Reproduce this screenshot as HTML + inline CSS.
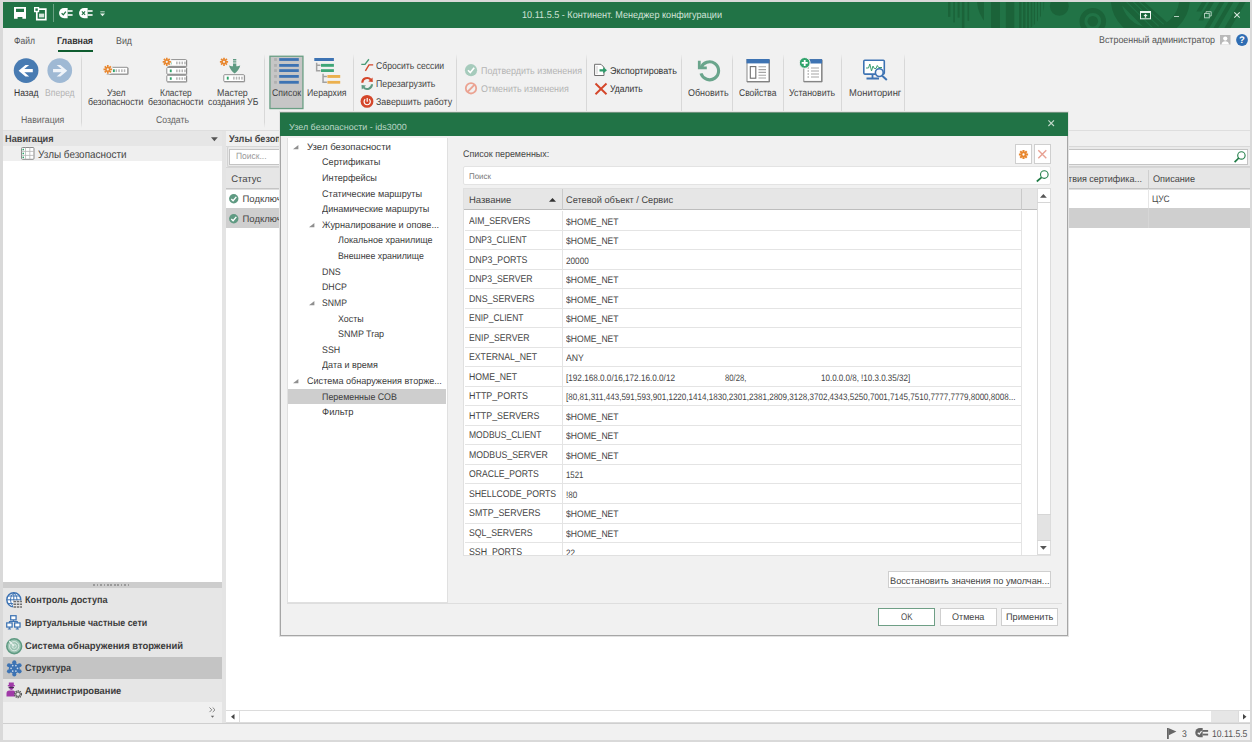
<!DOCTYPE html>
<html lang="ru"><head>
<meta charset="utf-8">
<title>10.11.5.5 - Континент. Менеджер конфигурации</title>
<style>
html,body{margin:0;padding:0}
body{text-rendering:geometricPrecision;width:1252px;height:742px;overflow:hidden;background:#f1f1f1;position:relative;font-family:"Liberation Sans",sans-serif;font-size:9.6px;color:#444}
.a{position:absolute}
.t{position:absolute;white-space:nowrap;line-height:12px;font-size:9.8px}
.c{text-align:center}
.b{font-weight:bold}
svg{position:absolute;overflow:visible}
.d{font-size:9.5px;color:#454545}
.vs{position:absolute;width:1px;background:linear-gradient(to bottom,rgba(214,214,214,0) 0,#d8d8d8 9%,#d8d8d8 92%,rgba(214,214,214,0) 100%);top:54px;height:74px}
.g{color:#b4b4b4}
</style>
</head>
<body>
<!-- TITLE BAR -->
<div class="a" style="left:0;top:0;width:1252px;height:28px;background:#217346"></div>
<svg style="left:940px;top:2px;overflow:hidden" width="310" height="26" viewBox="940 2 310 26">
 <defs><clipPath id="cpa"><circle cx="1011" cy="0" r="34"></circle></clipPath><clipPath id="cpb"><circle cx="1150.300" cy="-1.600" r="29.200"></circle></clipPath></defs>
 <g fill="#1b6339">
  <rect x="948" y="2" width="2.4" height="14.8"></rect>
  <rect x="953.3" y="2" width="1.5" height="20.4"></rect>
  <rect x="957.6" y="2" width="2.0" height="15.6"></rect>
  <rect x="961.9" y="2" width="2.5" height="26.0"></rect>
  <rect x="967.5" y="2" width="1.7" height="18.8"></rect>
  <g clip-path="url(#cpa)"><rect x="977" y="2" width="7.0" height="26"></rect><rect x="991" y="2" width="9.0" height="26"></rect><rect x="1005.8" y="2" width="8.5" height="26"></rect><rect x="1019" y="2" width="2.5" height="26"></rect><rect x="1023" y="2" width="2.5" height="26"></rect><rect x="1027" y="2" width="2.0" height="26"></rect><rect x="1030.7" y="2" width="1.6" height="26"></rect><rect x="1033.8" y="2" width="1.2" height="26"></rect><rect x="1037" y="2" width="1.0" height="26"></rect><rect x="1040" y="2" width="1.0" height="26"></rect><rect x="1043.4" y="2" width="0.8" height="26"></rect></g>
  <circle cx="1059.300" cy="6.300" r="9.400"></circle>
  <circle cx="1092.800" cy="21.300" r="5.300"></circle>
  <circle cx="1092.800" cy="21.300" r="10.850" fill="none" stroke="#1b6339" stroke-width="4.900"></circle>
  <circle cx="1150.300" cy="-1.600" r="34.300" fill="none" stroke="#1b6339" stroke-width="10.600"></circle>
  <g clip-path="url(#cpb)"><path d="M1116.6 0L1142.1 0L1175.5 30L1146.6 30Z"></path><g stroke="#217346" stroke-width="1.100" fill="none"><path d="M1124.7 0L1154.7 30"></path><path d="M1131.3 0L1162.5 30"></path><path d="M1137.4 0L1169.8 30"></path></g></g>
  <path d="M1202 2L1206.8 2L1201.2 11.5L1196.4 11.5Z"></path>
  <path d="M1209.3 2L1214.1 2L1203.2 20.6L1198.4 20.6Z"></path>
  <path d="M1219.6 2L1224.4 2L1209.2 28L1204.4 28Z"></path>
  <path d="M1228.7 2L1233.5 2L1218.3 28L1213.5 28Z"></path>
  <path d="M1239.6 2L1245.7 2L1230.5 28L1224.4 28Z"></path>
 </g>
</svg>
<!-- QAT icons -->
<svg style="left:14.200px;top:7.200px" width="12" height="11.800" viewBox="0 0 12 11.800"><path d="M0 0H12V11.800H0Z M2 1.700V5.100H10V1.700Z M3.600 10V11.800H8.400V10Z" fill="#fff" fill-rule="evenodd"></path></svg>
<svg style="left:33.500px;top:6.500px" width="13" height="13.500" viewBox="0 0 13 13.500"><path d="M2.800 2.200H11.800V12.600H2.800Z" fill="none" stroke="#fff" stroke-width="1.700"></path><rect x="0.700" y="0.700" width="3.800" height="3.800" fill="#217346" stroke="#fff" stroke-width="1.400"></rect><rect x="5" y="6.600" width="5.200" height="3.800" fill="#d5e6dc"></rect></svg>
<div class="a" style="left:52.500px;top:4px;width:1px;height:18px;background:#6aa283"></div>
<svg style="left:59px;top:8.100px" width="14" height="10.200" viewBox="0 0 14 10.200"><path d="M5.100 0H8.600V10.200H5.100A5.100 5.100 0 0 1 5.100 0Z" fill="#fff"></path><rect x="8.600" y="2.200" width="5" height="1.600" fill="#fff"></rect><rect x="8.600" y="6.200" width="5" height="1.600" fill="#fff"></rect><path d="M2.600 5.200L4.300 6.800L6.800 3.600" stroke="#217346" stroke-width="1.200" fill="none"></path></svg>
<svg style="left:79.100px;top:8.100px" width="14" height="10.200" viewBox="0 0 14 10.200"><path d="M5.100 0H8.600V10.200H5.100A5.100 5.100 0 0 1 5.100 0Z" fill="#fff"></path><rect x="8.600" y="2.200" width="5" height="1.600" fill="#fff"></rect><rect x="8.600" y="6.200" width="5" height="1.600" fill="#fff"></rect><path d="M2.900 3.500L6.100 6.900M6.100 3.500L2.900 6.900" stroke="#217346" stroke-width="1.100" fill="none"></path></svg>
<svg style="left:99.500px;top:10.500px" width="5" height="6" viewBox="0 0 5 6"><rect x="0.300" y="0.300" width="4.400" height="1" fill="#bcd6c6"></rect><path d="M0 2.600H5L2.500 5.200Z" fill="#e6f1ea"></path></svg>
<span class="t" style="left: 521.5px; color: rgb(210, 228, 217); top: 10px; transform: scaleX(0.929); transform-origin: 0px 50%;">10.11.5.5 - Континент. Менеджер конфигурации</span>
<!-- window controls -->
<svg style="left:1140px;top:10.500px" width="11" height="8.500" viewBox="0 0 11 8.500"><rect x="0.500" y="0.500" width="10" height="7.300" fill="none" stroke="#eef5f0" stroke-width="1"></rect><rect x="0.500" y="0.500" width="10" height="1.500" fill="#eef5f0"></rect><path d="M5.500 2.800L7.600 4.900H6.200V6.800H4.800V4.900H3.400Z" fill="#eef5f0"></path></svg>
<div class="a" style="left:1174px;top:16px;width:5px;height:1.400px;background:#b5d1c1"></div>
<svg style="left:1204px;top:11px" width="8" height="8" viewBox="0 0 8 8"><rect x="0.500" y="2.500" width="4.800" height="4.300" fill="none" stroke="#a9c9b7" stroke-width="1"></rect><path d="M2 2.500V0.700H7.200V5H5.300" fill="none" stroke="#a9c9b7" stroke-width="1"></path></svg>
<svg style="left:1234px;top:12px" width="6" height="6" viewBox="0 0 6 6"><path d="M0.300 0.300L5.700 5.700M5.700 0.300L0.300 5.700" stroke="#d9e9df" stroke-width="1.100"></path></svg>
<!-- MENU -->
<span class="t" style="left: 13.5px; color: rgb(85, 85, 85); top: 36px; transform: scaleX(0.872); transform-origin: 0px 50%;">Файл</span>
<span class="t b" style="left: 57.3px; color: rgb(51, 51, 51); top: 36px; transform: scaleX(0.904); transform-origin: 0px 50%;">Главная</span>
<span class="t" style="left: 116px; color: rgb(85, 85, 85); top: 36px; transform: scaleX(0.902); transform-origin: 0px 50%;">Вид</span>
<div class="a" style="left:58.400px;top:49.800px;width:34.200px;height:2.200px;background:#0e5c2f"></div>
<span class="t" style="left: 1098.8px; color: rgb(85, 85, 85); top: 35px; transform: scaleX(0.907); transform-origin: 0px 50%;">Встроенный администратор</span>
<svg style="left:1219.500px;top:34.700px" width="10.500" height="9.500" viewBox="0 0 10.500 9.500"><rect width="10.500" height="9.500" fill="#b9b9b9"></rect><circle cx="5.250" cy="3.600" r="2.100" fill="#fff"></circle><path d="M1.500 9.500A3.800 3.800 0 0 1 9 9.500Z" fill="#fff"></path></svg>
<svg style="left:1235.500px;top:33.600px" width="12" height="12" viewBox="0 0 12 12"><circle cx="6" cy="6" r="5.900" fill="#2f6db3"></circle><text x="6" y="9.400" font-family="Liberation Sans, sans-serif" font-size="9.500" font-weight="bold" fill="#fff" text-anchor="middle">?</text></svg>
<!-- RIBBON -->
<div class="a" style="left:2px;top:129.500px;width:1248px;height:1px;background:#dedede"></div>
<svg style="left:0;top:0" width="1252" height="132" viewBox="0 0 1252 132">
 <!-- back / forward -->
 <circle cx="26.100" cy="70.550" r="12.350" fill="#487bb2"></circle>
 <path d="M18.600 70.700L25.500 64.900H29.200L24.300 69.100H32.800V72.300H24.300L29.200 76.600H25.500Z" fill="#fff"></path>
 <circle cx="59.750" cy="70.550" r="12.350" fill="#9fb9d4"></circle>
 <path d="M67.250 70.700L60.350 64.900H56.650L61.550 69.100H53.050V72.300H61.550L56.650 76.600H60.350Z" fill="#f0f4f9"></path>
 <!-- Узел безопасности icon -->
 <rect x="106.3" y="67.3" width="21.5" height="6.8" rx="0.800" fill="#fff" stroke="#8f8f8f" stroke-width="1"></rect><path d="M106.8 74.39999999999999H128.1V67.8" fill="none" stroke="#858585" stroke-width="0.600"></path><rect x="112.9" y="69.3" width="1.900" height="2.8" fill="#2fa36b"></rect><rect x="115.6" y="69.3" width="1.500" height="2.8" fill="#b4b4b4"></rect><rect x="118.3" y="69.3" width="1.500" height="2.8" fill="#b4b4b4"></rect><rect x="121.1" y="69.3" width="1.500" height="2.8" fill="#b4b4b4"></rect><rect x="123.8" y="69.3" width="1.500" height="2.8" fill="#b4b4b4"></rect>
 <g transform="translate(107.8 69.4)" stroke="#e8872f" stroke-width="1.700" stroke-linecap="butt"><circle r="5.2" fill="#f1f1f1" stroke="none"></circle><path d="M0 -4.3V4.3M-4.3 0H4.3M-3.05 -3.05L3.05 3.05M-3.05 3.05L3.05 -3.05"></path><circle r="2.15" fill="#e8872f" stroke="none"></circle><circle r="1.100" fill="#f1f1f1" stroke="none"></circle></g>
 <!-- Кластер -->
 <rect x="166.8" y="59.6" width="19.7" height="6.7" rx="0.800" fill="#fff" stroke="#8f8f8f" stroke-width="1"></rect><path d="M167.3 66.6H186.8V60.1" fill="none" stroke="#858585" stroke-width="0.600"></path><rect x="169.8" y="61.6" width="1.900" height="2.7" fill="#2fa36b"></rect><rect x="176.1" y="61.6" width="1.500" height="2.7" fill="#b4b4b4"></rect><rect x="178.8" y="61.6" width="1.500" height="2.7" fill="#b4b4b4"></rect><rect x="181.5" y="61.6" width="1.500" height="2.7" fill="#b4b4b4"></rect><rect x="184.2" y="61.6" width="1.500" height="2.7" fill="#b4b4b4"></rect>
 <rect x="166.8" y="67.5" width="19.7" height="6.7" rx="0.800" fill="#fff" stroke="#8f8f8f" stroke-width="1"></rect><path d="M167.3 74.5H186.8V68.0" fill="none" stroke="#858585" stroke-width="0.600"></path><rect x="169.8" y="69.5" width="1.900" height="2.7" fill="#2fa36b"></rect><rect x="176.1" y="69.5" width="1.500" height="2.7" fill="#b4b4b4"></rect><rect x="178.8" y="69.5" width="1.500" height="2.7" fill="#b4b4b4"></rect><rect x="181.5" y="69.5" width="1.500" height="2.7" fill="#b4b4b4"></rect><rect x="184.2" y="69.5" width="1.500" height="2.7" fill="#b4b4b4"></rect>
 <rect x="166.8" y="75.3" width="19.7" height="6.5" rx="0.800" fill="#fff" stroke="#8f8f8f" stroke-width="1"></rect><path d="M167.3 82.1H186.8V75.8" fill="none" stroke="#858585" stroke-width="0.600"></path><rect x="169.8" y="77.3" width="1.900" height="2.5" fill="#2fa36b"></rect><rect x="176.1" y="77.3" width="1.500" height="2.5" fill="#b4b4b4"></rect><rect x="178.8" y="77.3" width="1.500" height="2.5" fill="#b4b4b4"></rect><rect x="181.5" y="77.3" width="1.500" height="2.5" fill="#b4b4b4"></rect><rect x="184.2" y="77.3" width="1.500" height="2.5" fill="#b4b4b4"></rect>
 <g transform="translate(166.8 61.8)" stroke="#e8872f" stroke-width="1.700" stroke-linecap="butt"><circle r="5.0" fill="#f1f1f1" stroke="none"></circle><path d="M0 -4.1V4.1M-4.1 0H4.1M-2.91 -2.91L2.91 2.91M-2.91 2.91L2.91 -2.91"></path><circle r="2.05" fill="#e8872f" stroke="none"></circle><circle r="1.100" fill="#f1f1f1" stroke="none"></circle></g>
 <!-- Мастер -->
 <rect x="223.8" y="74.7" width="20.5" height="6.9" rx="0.800" fill="#fff" stroke="#8f8f8f" stroke-width="1"></rect><path d="M224.3 81.9H244.60000000000002V75.2" fill="none" stroke="#858585" stroke-width="0.600"></path><rect x="226.8" y="76.7" width="1.900" height="2.9" fill="#2fa36b"></rect><rect x="233.1" y="76.7" width="1.500" height="2.9" fill="#b4b4b4"></rect><rect x="235.8" y="76.7" width="1.500" height="2.9" fill="#b4b4b4"></rect><rect x="238.5" y="76.7" width="1.500" height="2.9" fill="#b4b4b4"></rect><rect x="241.2" y="76.7" width="1.500" height="2.9" fill="#b4b4b4"></rect>
 <path d="M233 59H236.300V60.400H233ZM233 61.200H236.300V62.600H233ZM233 63.400H236.300V66.300C238 66.300 239.500 65.800 240.200 65.200C239.800 68.500 237 71.800 234.650 73.400C232.300 71.800 229.500 68.500 229.100 65.200C229.800 65.800 231.300 66.300 233 66.300Z" fill="#5f9a82"></path>
 <g transform="translate(224 61.8)" stroke="#e8872f" stroke-width="1.700" stroke-linecap="butt"><path d="M0 -4.1V4.1M-4.1 0H4.1M-2.91 -2.91L2.91 2.91M-2.91 2.91L2.91 -2.91"></path><circle r="2.05" fill="#e8872f" stroke="none"></circle><circle r="1.100" fill="#f1f1f1" stroke="none"></circle></g>
 <!-- Список button -->
 <rect x="269.950" y="56.250" width="33" height="52.300" fill="#c6c6c6" stroke="#6a9f84" stroke-width="1.300"></rect>
 <g fill="#3d73b3"><rect x="279.200" y="58.1" width="19.600" height="2.800"></rect><rect x="279.200" y="64" width="19.600" height="2.800"></rect><rect x="279.200" y="69.2" width="19.600" height="2.800"></rect><rect x="279.200" y="75" width="19.600" height="2.800"></rect><rect x="279.200" y="80.9" width="19.600" height="2.800"></rect></g>
 <g fill="#b0b0b0"><rect x="274.100" y="58.1" width="2.800" height="2.800"></rect><rect x="274.100" y="64" width="2.800" height="2.800"></rect><rect x="274.100" y="69.2" width="2.800" height="2.800"></rect><rect x="274.100" y="75" width="2.800" height="2.800"></rect><rect x="274.100" y="80.9" width="2.800" height="2.800"></rect></g>
 <!-- Иерархия icon -->
 <rect x="314.300" y="58" width="19.600" height="3" fill="#3d73b3"></rect>
 <rect x="321" y="63.900" width="12.900" height="2.900" fill="#3fa677"></rect><rect x="321" y="69.200" width="12.900" height="2.800" fill="#3fa677"></rect>
 <rect x="327.400" y="75" width="12.800" height="2.900" fill="#ebb04e"></rect><rect x="327.400" y="80.900" width="12.800" height="2.800" fill="#ebb04e"></rect>
 <path d="M316.650 62.800V70.700H320.500M316.650 65.200H320.500M323.050 73.800V82.200H326.900M323.050 76.500H326.900" fill="none" stroke="#a2a2a2" stroke-width="1.500"></path>
 <!-- Сбросить сессии -->
 <path d="M361.300 64.400H365L368.900 59.300" fill="none" stroke="#4a9a76" stroke-width="1.400"></path>
 <path d="M365.400 70.900L369 64.900H373.200" fill="none" stroke="#d4462a" stroke-width="1.400"></path>
 <!-- Перезагрузить -->
 <path d="M362.300 82.800A4.900 4.900 0 0 1 370.800 79.600" fill="none" stroke="#d4462a" stroke-width="2.100"></path>
 <path d="M368.300 81.500L372.800 82L372.500 77.500Z" fill="#d4462a"></path>
 <path d="M372 84.200A4.900 4.900 0 0 1 363.500 87.400" fill="none" stroke="#5f9a82" stroke-width="2.100"></path>
 <path d="M366 85.500L361.500 85L361.800 89.500Z" fill="#5f9a82"></path>
 <!-- Завершить работу -->
 <circle cx="367" cy="101.400" r="6.400" fill="#d4462a"></circle>
 <path d="M365.200 99.300A3.100 3.100 0 1 0 369.200 99.300" fill="none" stroke="#fff" stroke-width="1.200"></path><path d="M367.200 98V101.800" stroke="#fff" stroke-width="1.200"></path>
 <!-- Подтвердить / Отменить -->
 <circle cx="471" cy="70.200" r="6.100" fill="#a6cbbc"></circle><path d="M468 70.300L470.300 72.600L474.200 67.800" fill="none" stroke="#fff" stroke-width="1.600"></path>
 <circle cx="471" cy="88.300" r="5.200" fill="none" stroke="#eba392" stroke-width="1.800"></circle><path d="M467.400 92L474.600 84.600" stroke="#eba392" stroke-width="1.800"></path>
 <!-- Экспортировать -->
 <path d="M594.600 64.300H601L604 67.300V75.500H594.600Z" fill="#fff" stroke="#6e6e6e" stroke-width="1"></path>
 <path d="M597 66.500V73.500" stroke="#9a9a9a" stroke-width="1" stroke-dasharray="1 1"></path>
 <path d="M599.500 69.200H603.200V67L607 70.300L603.200 73.600V71.400H599.500Z" fill="#2f9a6a"></path>
 <!-- Удалить -->
 <path d="M595.500 83.500L606.500 94.300M606.500 83.500L595.500 94.300" stroke="#d4462a" stroke-width="1.900"></path>
 <!-- Обновить -->
 <path d="M701 68.200A9 9 0 1 1 701 73.400" fill="none" stroke="#6aa58c" stroke-width="3.100"></path>
 <path d="M699.300 60.700V67.800H706.800" fill="none" stroke="#6aa58c" stroke-width="2.800"></path>
 <!-- Свойства -->
 <rect x="747" y="59.500" width="22" height="22" fill="#fff" stroke="#8a8a8a" stroke-width="1"></rect>
 <path d="M747 82H769.500V60" fill="none" stroke="#777" stroke-width="0.800"></path>
 <rect x="746.500" y="59" width="23" height="4.400" fill="#3d73b3"></rect>
 <rect x="750.300" y="66.600" width="5.500" height="11.600" fill="#fff" stroke="#6e6e6e" stroke-width="1.100"></rect>
 <path d="M758.500 66.800H766M758.500 69.600H766M758.500 72.400H766M758.500 75.200H766M758.500 78H766" stroke="#a5a5a5" stroke-width="1.100"></path>
 <!-- Установить -->
 <rect x="803.800" y="59.600" width="17.800" height="21.800" fill="#fff" stroke="#8a8a8a" stroke-width="1"></rect>
 <path d="M803.800 81.900H822.100V60" fill="none" stroke="#777" stroke-width="0.800"></path>
 <rect x="810" y="59.100" width="12.100" height="4.400" fill="#3d73b3"></rect>
 <path d="M807.500 68H809M807.500 71H809M807.500 74H809M807.500 77H809" stroke="#8a8a8a" stroke-width="1.200"></path>
 <path d="M811 68H819M811 71H819M811 74H819M811 77H819" stroke="#a5a5a5" stroke-width="1.100"></path>
 <circle cx="804.700" cy="62.900" r="5.400" fill="#2fa36b" stroke="#f1f1f1" stroke-width="1"></circle>
 <path d="M804.700 59.900V65.900M801.700 62.900H807.700" stroke="#fff" stroke-width="1.800"></path>
 <!-- Мониторинг -->
 <rect x="863.800" y="60.300" width="20.500" height="13.800" rx="1" fill="#fff" stroke="#3d73b3" stroke-width="1.600"></rect>
 <path d="M866 68H868.500L869.800 64L871.500 71L873 66L874.300 68.500H876L877.300 65.500L878.600 67.500H882" fill="none" stroke="#3c9f72" stroke-width="1"></path>
 <path d="M872.500 74.500V77.500M866.500 78.500H879" stroke="#3d73b3" stroke-width="1.800"></path>
 <circle cx="879.300" cy="72.600" r="3.900" fill="#f4f7fb" stroke="#3d73b3" stroke-width="1.600"></circle>
 <path d="M882.200 75.700L886.800 80" stroke="#3d73b3" stroke-width="2"></path>
</svg>
<div class="vs" style="left:81.0px"></div>
<div class="vs" style="left:264.3px"></div>
<div class="vs" style="left:353.0px"></div>
<div class="vs" style="left:456.4px"></div>
<div class="vs" style="left:586.0px"></div>
<div class="vs" style="left:681.1px"></div>
<div class="vs" style="left:732.0px"></div>
<div class="vs" style="left:783.0px"></div>
<div class="vs" style="left:841.3px"></div>
<div class="vs" style="left:903.5px"></div>
<span class="t " style="left: 13.7px; color: rgb(51, 51, 51); top: 88px; transform: scaleX(0.873); transform-origin: 0px 50%;">Назад</span>
<span class="t g" style="left: 45.3px; top: 88px; transform: scaleX(0.879); transform-origin: 0px 50%;">Вперед</span>
<span class="t " style="left: 21px; color: rgb(102, 102, 102); top: 115px; transform: scaleX(0.895); transform-origin: 0px 50%;">Навигация</span>
<span class="t " style="left: 106.6px; color: rgb(68, 68, 68); top: 88px; transform: scaleX(0.89); transform-origin: 0px 50%;">Узел</span>
<span class="t " style="left: 87.9px; color: rgb(68, 68, 68); top: 97px; transform: scaleX(0.896); transform-origin: 0px 50%;">безопасности</span>
<span class="t " style="left: 159.7px; color: rgb(68, 68, 68); top: 88px; transform: scaleX(0.858); transform-origin: 0px 50%;">Кластер</span>
<span class="t " style="left: 147.8px; color: rgb(68, 68, 68); top: 97px; transform: scaleX(0.894); transform-origin: 0px 50%;">безопасности</span>
<span class="t " style="left: 217.4px; color: rgb(68, 68, 68); top: 88px; transform: scaleX(0.908); transform-origin: 0px 50%;">Мастер</span>
<span class="t " style="left: 208px; color: rgb(68, 68, 68); top: 97px; transform: scaleX(0.877); transform-origin: 0px 50%;">создания УБ</span>
<span class="t " style="left: 156.3px; color: rgb(102, 102, 102); top: 115px; transform: scaleX(0.886); transform-origin: 0px 50%;">Создать</span>
<span class="t " style="left: 271.7px; color: rgb(68, 68, 68); top: 88px; transform: scaleX(0.892); transform-origin: 0px 50%;">Список</span>
<span class="t " style="left: 307.4px; color: rgb(68, 68, 68); top: 88px; transform: scaleX(0.892); transform-origin: 0px 50%;">Иерархия</span>
<span class="t " style="left: 376.3px; color: rgb(68, 68, 68); top: 61px; transform: scaleX(0.879); transform-origin: 0px 50%;">Сбросить сессии</span>
<span class="t " style="left: 376.3px; color: rgb(68, 68, 68); top: 79px; transform: scaleX(0.893); transform-origin: 0px 50%;">Перезагрузить</span>
<span class="t " style="left: 376.3px; color: rgb(68, 68, 68); top: 97px; transform: scaleX(0.904); transform-origin: 0px 50%;">Завершить работу</span>
<span class="t g" style="left: 480.7px; top: 66px; transform: scaleX(0.91); transform-origin: 0px 50%;">Подтвердить изменения</span>
<span class="t g" style="left: 480.7px; top: 84px; transform: scaleX(0.908); transform-origin: 0px 50%;">Отменить изменения</span>
<span class="t " style="left: 610px; color: rgb(51, 51, 51); top: 66px; transform: scaleX(0.914); transform-origin: 0px 50%;">Экспортировать</span>
<span class="t " style="left: 610px; color: rgb(51, 51, 51); top: 84px; transform: scaleX(0.872); transform-origin: 0px 50%;">Удалить</span>
<span class="t " style="left: 688px; color: rgb(68, 68, 68); top: 88px; transform: scaleX(0.915); transform-origin: 0px 50%;">Обновить</span>
<span class="t " style="left: 739.2px; color: rgb(68, 68, 68); top: 88px; transform: scaleX(0.869); transform-origin: 0px 50%;">Свойства</span>
<span class="t " style="left: 789.4px; color: rgb(68, 68, 68); top: 88px; transform: scaleX(0.898); transform-origin: 0px 50%;">Установить</span>
<span class="t " style="left: 848.5px; color: rgb(68, 68, 68); top: 88px; transform: scaleX(0.962); transform-origin: 0px 50%;">Мониторинг</span>
<!-- NAV PANEL -->
<div class="a" style="left:2px;top:130.500px;width:1248px;height:593px;background:#e4e4e4"></div>
<div class="a" style="left:2px;top:131px;width:220.400px;height:15.400px;background:#e6e6e6"></div>
<div class="a" style="left:2px;top:146.400px;width:220.400px;height:435.400px;background:#fff"></div>
<div class="a" style="left:2px;top:146.400px;width:220.400px;height:14.800px;background:#efefef"></div>
<svg style="left:211px;top:136.500px" width="6.800" height="4.300" viewBox="0 0 6 3.500"><path d="M0 0H6L3 3.500Z" fill="#555"></path></svg>
<svg style="left:21.300px;top:147.300px" width="13.500" height="12.800" viewBox="0 0 13.500 12.800"><rect x="0.500" y="0.500" width="12.500" height="11.800" rx="1" fill="#fff" stroke="#8a8a8a"></rect><path d="M0.500 4.400H13M0.500 8.400H13M4.500 0.500V12.300M8.800 0.500V12.300" stroke="#b5b5b5" stroke-width="0.800"></path><rect x="1.500" y="1.800" width="1.500" height="1.500" fill="#2fa36b"></rect><rect x="1.500" y="5.700" width="1.500" height="1.500" fill="#2fa36b"></rect><rect x="1.500" y="9.600" width="1.500" height="1.500" fill="#2fa36b"></rect></svg>
<div class="a" style="left:2px;top:581.800px;width:220.400px;height:6.200px;background:#cdcdcd"></div>
<div class="a" style="left:93px;top:584px;width:38px;height:1.500px;background:repeating-linear-gradient(90deg,#9a9a9a 0 1.500px,transparent 1.500px 3.500px)"></div>
<div class="a" style="left:2px;top:588px;width:220.400px;height:113.700px;background:#e6e6e6"></div>
<div class="a" style="left:2px;top:657.200px;width:220.400px;height:21.800px;background:#c4c4c4"></div>
<div class="a" style="left:2px;top:701.700px;width:220.400px;height:21.300px;background:#f0f0f0"></div>
<!-- nav icons -->
<svg style="left:5.500px;top:592px" width="17" height="17" viewBox="0 0 17 17"><circle cx="7.800" cy="7.800" r="7" fill="#fff" stroke="#3d73b3" stroke-width="1.400"></circle><path d="M7.800 0.800V14.800M0.800 7.800H14.800M2 4H13.600M2 11.600H13.600M7.800 0.800C3.500 4 3.500 11.600 7.800 14.800M7.800 0.800C12 4 12 11.600 7.800 14.800" fill="none" stroke="#3d73b3" stroke-width="1"></path><rect x="7" y="8.500" width="9.500" height="7.500" fill="#e6e6e6"></rect><path d="M7.500 9.500H16M7.500 12.200H16M7.500 15H16" stroke="#6e6e6e" stroke-width="1.500" stroke-dasharray="2.500 0.800"></path></svg>
<svg style="left:5.800px;top:615px" width="15.300" height="15.300" viewBox="0 0 17 17"><g fill="#fff" stroke="#3d73b3" stroke-width="1.400"><rect x="5.200" y="0.800" width="6" height="4.600"></rect><rect x="0.800" y="8.800" width="6" height="4.600"></rect><rect x="9.600" y="8.800" width="6" height="4.600"></rect></g><path d="M8.200 5.500V7.200M3.800 8.800V7.200H12.600V8.800M2 15.500H5.600M10.800 15.500H14.400M3.800 13.500V15.500M12.600 13.500V15.500" fill="none" stroke="#3d73b3" stroke-width="1.200"></path></svg>
<svg style="left:5.500px;top:637.800px" width="17" height="17" viewBox="0 0 17 17"><circle cx="8.200" cy="8.200" r="7.400" fill="#9cc4b3" stroke="#5f9a82" stroke-width="1.600"></circle><circle cx="8.200" cy="8.200" r="4.600" fill="none" stroke="#dcebe4" stroke-width="1"></circle><circle cx="8.200" cy="8.200" r="2.100" fill="none" stroke="#dcebe4" stroke-width="1"></circle><path d="M8.200 8.200L3.200 3" stroke="#e6f1ec" stroke-width="1.300"></path></svg>
<svg style="left:5.700px;top:660.200px" width="16.600" height="16.600" viewBox="0 0 16.600 16.600"><g fill="#3d73b3"><circle cx="8.3" cy="8.3" r="5.400"></circle><circle cx="8.30" cy="2.20" r="2.050"></circle><circle cx="13.58" cy="5.25" r="2.050"></circle><circle cx="13.58" cy="11.35" r="2.050"></circle><circle cx="8.30" cy="14.40" r="2.050"></circle><circle cx="3.02" cy="11.35" r="2.050"></circle><circle cx="3.02" cy="5.25" r="2.050"></circle></g><g fill="#c9d9ec"><circle cx="9.90" cy="5.53" r="0.850"></circle><circle cx="11.50" cy="8.30" r="0.850"></circle><circle cx="9.90" cy="11.07" r="0.850"></circle><circle cx="6.70" cy="11.07" r="0.850"></circle><circle cx="5.10" cy="8.30" r="0.850"></circle><circle cx="6.70" cy="5.53" r="0.850"></circle></g></svg>
<svg style="left:5.500px;top:682px" width="17" height="17" viewBox="0 0 17 17"><rect x="2.800" y="0.500" width="5" height="2.600" fill="#a03aa8"></rect><rect x="1.800" y="3" width="7" height="1.300" fill="#a03aa8"></rect><circle cx="5.300" cy="5.800" r="2.100" fill="#a03aa8"></circle><rect x="2.600" y="4.800" width="5.400" height="1.300" fill="#4a2a55"></rect><path d="M0.500 14.500V11.500A3 3 0 0 1 3.500 8.500H7A3 3 0 0 1 9 9.500V14.500Z" fill="#a03aa8"></path><circle cx="12" cy="12.200" r="3.300" fill="#e6e6e6" stroke="#555" stroke-width="1.500" stroke-dasharray="1.300 0.800"></circle><circle cx="12" cy="12.200" r="2.200" fill="#e6e6e6" stroke="#555" stroke-width="1"></circle></svg>
<svg style="left:209.400px;top:706.500px" width="7" height="12" viewBox="0 0 7 12"><path d="M0.500 0.500L2.800 2.800L0.500 5.100M3.700 0.500L6 2.800L3.700 5.100" fill="none" stroke="#777" stroke-width="0.900"></path><path d="M1.800 8.700H5.200L3.500 10.800Z" fill="#666"></path></svg>
<span class="t b" style="left: 5.1px; color: rgb(68, 68, 68); top: 134px; transform: scaleX(0.937); transform-origin: 0px 50%;">Навигация</span>
<span class="t " style="left: 38.2px; font-size: 10.9px; color: rgb(68, 68, 68); top: 149px; transform: scaleX(0.91); transform-origin: 0px 50%;">Узлы безопасности</span>
<span class="t b" style="left: 24.8px; color: rgb(60, 60, 60); top: 595px; transform: scaleX(0.931); transform-origin: 0px 50%;">Контроль доступа</span>
<span class="t b" style="left: 24.8px; color: rgb(60, 60, 60); top: 618px; transform: scaleX(0.906); transform-origin: 0px 50%;">Виртуальные частные сети</span>
<span class="t b" style="left: 24.8px; color: rgb(60, 60, 60); top: 641px; transform: scaleX(0.963); transform-origin: 0px 50%;">Система обнаружения вторжений</span>
<span class="t b" style="left: 24.8px; color: rgb(60, 60, 60); top: 663px; transform: scaleX(0.924); transform-origin: 0px 50%;">Структура</span>
<span class="t b" style="left: 24.8px; color: rgb(60, 60, 60); top: 686px; transform: scaleX(0.949); transform-origin: 0px 50%;">Администрирование</span>
<!-- MAIN PANEL -->
<div class="a" style="left:226px;top:131px;width:1024px;height:15.400px;background:#f0f0f0"></div>
<div class="a" style="left:226px;top:146.400px;width:1024px;height:22px;background:#e9e9e9"></div>
<div class="a" style="left:226px;top:168.400px;width:1024px;height:541.600px;background:#fff"></div>
<div class="a" style="left:227px;top:146px;width:1023px;height:21px;background:#eaeaea;border:1px solid #d2d2d2;border-right:none;border-radius:2px 0 0 2px;box-sizing:border-box"></div>
<div class="a" style="left:229px;top:149px;width:1018.500px;height:15.500px;background:#fff;border:1px solid #c4c4c4;box-sizing:border-box"></div>
<svg style="left:1234px;top:151px" width="12" height="12" viewBox="0 0 12 12"><circle cx="7.400" cy="4.400" r="3.700" fill="none" stroke="#2a8450" stroke-width="1.150"></circle><path d="M4.800 7L0.600 11.200" stroke="#1e7a45" stroke-width="1.700"></path></svg>
<div class="a" style="left:226px;top:167px;width:1024px;height:1px;background:#d6d6d6"></div>
<div class="a" style="left:226px;top:168px;width:1024px;height:20px;background:#e6e6e6"></div>
<div class="a" style="left:226px;top:188px;width:1024px;height:1px;background:#c4c4c4"></div>
<div class="a" style="left:226px;top:189px;width:1024px;height:1px;background:#dedede"></div>
<div class="a" style="left:1148px;top:170px;width:1px;height:18px;background:#cfcfcf"></div>
<div class="a" style="left:226px;top:208px;width:1024px;height:20px;background:#cfcfcf"></div>
<div class="a" style="left:1148px;top:189px;width:1px;height:19.800px;background:#e6e6e6"></div>
<svg style="left:229.300px;top:194.300px" width="9.500" height="9.500" viewBox="0 0 9.500 9.500"><circle cx="4.750" cy="4.750" r="4.700" fill="#5f9a82"></circle><path d="M2.300 4.900L4.100 6.700L7.300 2.900" fill="none" stroke="#fff" stroke-width="1.400"></path></svg>
<svg style="left:229.300px;top:213.800px" width="9.500" height="9.500" viewBox="0 0 9.500 9.500"><circle cx="4.750" cy="4.750" r="4.700" fill="#5f9a82"></circle><path d="M2.300 4.900L4.100 6.700L7.300 2.900" fill="none" stroke="#fff" stroke-width="1.400"></path></svg>
<div class="a" style="left:1148px;top:208px;width:1px;height:20px;background:#d6d6d6"></div>
<div class="a" style="left:226px;top:145.900px;width:1024px;height:1px;background:#d8d8d8"></div>
<!-- h scrollbar -->
<div class="a" style="left:226px;top:710px;width:1024px;height:13.400px;background:#fff;border-top:1px solid #dcdcdc;border-bottom:1px solid #dcdcdc;box-sizing:border-box"></div>
<div class="a" style="left:1210.500px;top:711px;width:28px;height:11.400px;background:#e6e6e6"></div>
<div class="a" style="left:239px;top:711px;width:1px;height:11.400px;background:#dcdcdc"></div>
<div class="a" style="left:1238.400px;top:711px;width:1px;height:11.400px;background:#dcdcdc"></div>
<svg style="left:230.800px;top:714px" width="3.500" height="5.600" viewBox="0 0 4 6.500"><path d="M4 0V6.500L0 3.250Z" fill="#444"></path></svg>
<svg style="left:1242.500px;top:714px" width="3.500" height="5.600" viewBox="0 0 4 6.500"><path d="M0 0V6.500L4 3.250Z" fill="#444"></path></svg>
<!-- STATUS BAR -->
<div class="a" style="left:2px;top:723.400px;width:1248px;height:16.600px;background:#f1f1f1"></div>
<div class="a" style="left:2px;top:723px;width:1248px;height:1px;background:#cfcfcf"></div>
<svg style="left:1167px;top:727.600px" width="10" height="11" viewBox="0 0 10 11"><path d="M0.900 0V11" stroke="#666" stroke-width="1.800"></path><path d="M1.800 0.300L9.400 3.600L1.800 7.200Z" fill="#666"></path></svg>
<svg style="left:1195.300px;top:728.400px" width="13.500" height="9.300" viewBox="0 0 14 10.200"><path d="M5 0H8V10.200H5A5.100 5.100 0 0 1 5 0Z" fill="#666"></path><rect x="8" y="2.200" width="6" height="2" fill="#666"></rect><rect x="8" y="6.200" width="6" height="2" fill="#666"></rect><path d="M2.600 5.200L4.300 6.800L6.800 3.500" stroke="#f1f1f1" stroke-width="1.300" fill="none"></path></svg>
<span class="t b" style="left: 229.3px; color: rgb(68, 68, 68); transform: scaleX(0.93); transform-origin: 0px 50%; top: 134px;">Узлы безопасности</span>
<span class="t " style="left: 235.8px; color: rgb(154, 154, 154); font-size: 9.1px; top: 150px; transform: scaleX(0.933); transform-origin: 0px 50%;">Поиск...</span>
<span class="t d" style="left: 231.2px; top: 174px;">Статус</span>
<span class="t d" style="left: 242.5px; top: 194px;">Подключен</span>
<span class="t d" style="left: 242.5px; top: 214px;">Подключен</span>
<span class="t d" style="left: 1018.7px; width: 120px; text-align: right; transform: scaleX(0.947); transform-origin: 100% 50%; top: 174px;">Срок действия сертифика...</span>
<span class="t d" style="left: 1153.4px; top: 174px; transform: scaleX(0.961); transform-origin: 0px 50%;">Описание</span>
<span class="t d" style="left: 1151.8px; font-size: 9.3px; top: 193px; transform: scaleX(0.908); transform-origin: 0px 50%;">ЦУС</span>
<span class="t " style="left: 1181.6px; color: rgb(85, 85, 85); top: 729px; transform: scaleX(0.88); transform-origin: 0px 50%;">3</span>
<span class="t " style="left: 1211.7px; color: rgb(85, 85, 85); top: 729px; transform: scaleX(0.882); transform-origin: 0px 50%;">10.11.5.5</span>
<!-- DIALOG -->
<div class="a" style="left:279px;top:111px;width:790px;height:525.500px;background:#e2e2e2"></div>
<div class="a" style="left:280px;top:112px;width:788px;height:523.500px;background:#f1f1f1;border:1px solid #a6a6a6;border-top:none;box-sizing:border-box"></div>
<div class="a" style="left:280px;top:112px;width:788px;height:24.200px;background:#217346"></div>
<div class="a" style="left:280px;top:112px;width:788px;height:1px;background:#6d927c"></div>
<svg style="left:1047.800px;top:120.200px" width="6.400" height="6.400" viewBox="0 0 6.400 6.400"><path d="M0.400 0.400L6 6M6 0.400L0.400 6" stroke="#c3dacc" stroke-width="1.100"></path></svg>
<div class="a" style="left:286.500px;top:137.500px;width:161px;height:465.500px;background:#fff;border:1px solid #e0e0e0;border-top:none;box-sizing:border-box"></div>
<div class="a" style="left:288px;top:389px;width:158px;height:15px;background:#cecece"></div>
<span class="t " style="left: 289px; color: rgb(188, 214, 199); font-size: 8.9px; top: 121px; transform: scaleX(1.01); transform-origin: 0px 50%;">Узел безопасности - ids3000</span>
<span class="t d" style="left: 306.6px; color: rgb(60, 60, 60); top: 142px; transform: scaleX(1.012); transform-origin: 0px 50%;">Узел безопасности</span>
<svg style="left:293.4px;top:144.9px" width="5.400" height="4.200" viewBox="0 0 5.400 4.200"><path d="M5.400 0V4.200H0Z" fill="#8f8f8f"></path></svg>
<span class="t d" style="left: 322.2px; color: rgb(60, 60, 60); top: 157px; transform: scaleX(0.963); transform-origin: 0px 50%;">Сертификаты</span>
<span class="t d" style="left: 322.2px; color: rgb(60, 60, 60); top: 173px; transform: scaleX(0.964); transform-origin: 0px 50%;">Интерфейсы</span>
<span class="t d" style="left: 322.2px; color: rgb(60, 60, 60); top: 189px; transform: scaleX(0.961); transform-origin: 0px 50%;">Статические маршруты</span>
<span class="t d" style="left: 322.2px; color: rgb(60, 60, 60); top: 204px; transform: scaleX(0.956); transform-origin: 0px 50%;">Динамические маршруты</span>
<span class="t d" style="left: 322.2px; color: rgb(60, 60, 60); top: 220px; transform: scaleX(0.967); transform-origin: 0px 50%;">Журналирование и опове...</span>
<svg style="left:309.0px;top:223.1px" width="5.400" height="4.200" viewBox="0 0 5.400 4.200"><path d="M5.400 0V4.200H0Z" fill="#8f8f8f"></path></svg>
<span class="t d" style="left: 337.8px; color: rgb(60, 60, 60); top: 235px; transform: scaleX(0.947); transform-origin: 0px 50%;">Локальное хранилище</span>
<span class="t d" style="left: 337.8px; color: rgb(60, 60, 60); top: 251px; transform: scaleX(0.926); transform-origin: 0px 50%;">Внешнее хранилище</span>
<span class="t d" style="left: 322.2px; color: rgb(60, 60, 60); top: 267px; transform: scaleX(0.932); transform-origin: 0px 50%;">DNS</span>
<span class="t d" style="left: 322.2px; color: rgb(60, 60, 60); top: 282px; transform: scaleX(0.925); transform-origin: 0px 50%;">DHCP</span>
<span class="t d" style="left: 322.2px; color: rgb(60, 60, 60); top: 298px; transform: scaleX(0.907); transform-origin: 0px 50%;">SNMP</span>
<svg style="left:309.0px;top:301.2px" width="5.400" height="4.200" viewBox="0 0 5.400 4.200"><path d="M5.400 0V4.200H0Z" fill="#8f8f8f"></path></svg>
<span class="t d" style="left: 337.8px; color: rgb(60, 60, 60); top: 314px; transform: scaleX(0.932); transform-origin: 0px 50%;">Хосты</span>
<span class="t d" style="left: 337.8px; color: rgb(60, 60, 60); top: 329px; transform: scaleX(0.942); transform-origin: 0px 50%;">SNMP Trap</span>
<span class="t d" style="left: 322.2px; color: rgb(60, 60, 60); top: 345px; transform: scaleX(0.931); transform-origin: 0px 50%;">SSH</span>
<span class="t d" style="left: 322.2px; color: rgb(60, 60, 60); top: 360px; transform: scaleX(0.947); transform-origin: 0px 50%;">Дата и время</span>
<span class="t d" style="left: 306.6px; color: rgb(60, 60, 60); top: 376px; transform: scaleX(0.954); transform-origin: 0px 50%;">Система обнаружения вторже...</span>
<svg style="left:293.4px;top:379.4px" width="5.400" height="4.200" viewBox="0 0 5.400 4.200"><path d="M5.400 0V4.200H0Z" fill="#8f8f8f"></path></svg>
<span class="t d" style="left: 322.2px; color: rgb(60, 60, 60); top: 392px; transform: scaleX(0.934); transform-origin: 0px 50%;">Переменные СОВ</span>
<span class="t d" style="left: 322.2px; color: rgb(60, 60, 60); top: 407px; transform: scaleX(0.987); transform-origin: 0px 50%;">Фильтр</span>
<!-- right pane -->
<div class="a" style="left:1015.400px;top:144.200px;width:16.600px;height:19.400px;background:#fff;border:1px solid #cfcfcf;box-sizing:border-box"></div>
<div class="a" style="left:1033.500px;top:144.200px;width:17px;height:19.400px;background:#fff;border:1px solid #cfcfcf;box-sizing:border-box"></div>
<svg style="left:1019.300px;top:149.600px" width="9" height="9" viewBox="-4.500 -4.500 9 9"><g stroke="#e8872f" stroke-width="2.100"><path d="M0 -4.600V4.600M-4.600 0H4.600M-3.250 -3.250L3.250 3.250M-3.250 3.250L3.250 -3.250"></path></g><circle r="2.800" fill="#e8872f"></circle><circle r="1.150" fill="#fff"></circle></svg>
<svg style="left:1037.700px;top:149.800px" width="8.600" height="8.600" viewBox="0 0 8.600 8.600"><path d="M0.300 0.300L8.300 8.300M8.300 0.300L0.300 8.300" stroke="#e8a294" stroke-width="1.400"></path></svg>
<div class="a" style="left:462.800px;top:166.400px;width:588.400px;height:18.600px;background:#fff;border:1px solid #e3e3e3;border-radius:2px;box-sizing:border-box"></div>
<svg style="left:1036.400px;top:169.700px" width="13" height="12" viewBox="0 0 13 12"><circle cx="8.300" cy="4.500" r="3.800" fill="none" stroke="#2a8450" stroke-width="1.150"></circle><path d="M5.600 7.300L0.800 11.500" stroke="#1e7a45" stroke-width="1.700"></path></svg>
<!-- table -->
<div class="a" style="left:462.800px;top:187.800px;width:588.400px;height:368.200px;background:#fff;border:1px solid #e0e0e0;box-sizing:border-box"></div>
<div class="a" style="left:464px;top:188.600px;width:573px;height:20.400px;background:#e6e6e6;border-bottom:1.500px solid #bdbdbd"></div>
<div class="a" style="left:561.500px;top:189px;width:1px;height:21px;background:#c9c9c9"></div>
<div class="a" style="left:1020.500px;top:189px;width:1px;height:21px;background:#c9c9c9"></div>
<svg style="left:548.600px;top:198.200px" width="7" height="3.800" viewBox="0 0 7 3.800"><path d="M0 3.800H7L3.500 0Z" fill="#333"></path></svg>
<div class="a" style="left:561.500px;top:211px;width:1px;height:344px;background:#e4e4e4"></div>
<div class="a" style="left:1020.500px;top:211px;width:1px;height:344px;background:#e4e4e4"></div>
<!-- scrollbar -->
<div class="a" style="left:1037px;top:188px;width:14px;height:367px;background:#fff;border:1px solid #dcdcdc;box-sizing:border-box"></div>
<div class="a" style="left:1038px;top:514.700px;width:12px;height:25.400px;background:#e3e3e3"></div>
<div class="a" style="left:1037px;top:514px;width:14px;height:1px;background:#d6d6d6"></div>
<div class="a" style="left:1037px;top:201.800px;width:14px;height:1px;background:#d6d6d6"></div>
<div class="a" style="left:1037px;top:540.100px;width:14px;height:1px;background:#d6d6d6"></div>
<svg style="left:1040.200px;top:193.500px" width="6.800" height="3.800" viewBox="0 0 6.800 3.800"><path d="M0 3.800H6.800L3.400 0Z" fill="#555"></path></svg>
<svg style="left:1040.300px;top:546px" width="6.800" height="3.800" viewBox="0 0 6.800 3.800"><path d="M0 0H6.800L3.400 3.800Z" fill="#555"></path></svg>
<span class="t d" style="left: 462.8px; top: 149px; transform: scaleX(0.939); transform-origin: 0px 50%;">Список переменных:</span>
<span class="t " style="left: 468.8px; font-size: 8.2px; color: rgb(119, 119, 119); top: 171px; transform: scaleX(0.969); transform-origin: 0px 50%;">Поиск</span>
<span class="t d" style="left: 468.8px; top: 195px; transform: scaleX(0.996); transform-origin: 0px 50%;">Название</span>
<span class="t d" style="left: 566.2px; top: 195px; transform: scaleX(0.971); transform-origin: 0px 50%;">Сетевой объект / Сервис</span>
<div class="a" style="left:463.800px;top:211px;width:573px;height:343.600px;overflow:hidden">
<span class="t d" style="left: 5px; font-size: 9.8px; top: 5px; transform: scaleX(0.883); transform-origin: 0px 50%;">AIM_SERVERS</span><span class="t" style="left: 102.4px; font-size: 9.4px; color: rgb(68, 68, 68); top: 5px; transform: scaleX(0.918); transform-origin: 0px 50%;">$HOME_NET</span><div class="a" style="left:1px;top:18.60px;width:556px;height:1px;background:#e4e4e4"></div>
<span class="t d" style="left: 5px; font-size: 9.8px; top: 24px; transform: scaleX(0.87); transform-origin: 0px 50%;">DNP3_CLIENT</span><span class="t" style="left: 102.4px; font-size: 9.4px; color: rgb(68, 68, 68); top: 24px; transform: scaleX(0.918); transform-origin: 0px 50%;">$HOME_NET</span><div class="a" style="left:1px;top:38.13px;width:556px;height:1px;background:#e4e4e4"></div>
<span class="t d" style="left: 5px; font-size: 9.8px; top: 44px; transform: scaleX(0.896); transform-origin: 0px 50%;">DNP3_PORTS</span><span class="t" style="left: 102.4px; font-size: 9.4px; color: rgb(68, 68, 68); top: 44px; transform: scaleX(0.874); transform-origin: 0px 50%;">20000</span><div class="a" style="left:1px;top:57.66px;width:556px;height:1px;background:#e4e4e4"></div>
<span class="t d" style="left: 5px; font-size: 9.8px; top: 63px; transform: scaleX(0.886); transform-origin: 0px 50%;">DNP3_SERVER</span><span class="t" style="left: 102.4px; font-size: 9.4px; color: rgb(68, 68, 68); top: 63px; transform: scaleX(0.918); transform-origin: 0px 50%;">$HOME_NET</span><div class="a" style="left:1px;top:77.19px;width:556px;height:1px;background:#e4e4e4"></div>
<span class="t d" style="left: 5px; font-size: 9.8px; top: 83px; transform: scaleX(0.9); transform-origin: 0px 50%;">DNS_SERVERS</span><span class="t" style="left: 102.4px; font-size: 9.4px; color: rgb(68, 68, 68); top: 83px; transform: scaleX(0.918); transform-origin: 0px 50%;">$HOME_NET</span><div class="a" style="left:1px;top:96.72px;width:556px;height:1px;background:#e4e4e4"></div>
<span class="t d" style="left: 5px; font-size: 9.8px; top: 102px; transform: scaleX(0.863); transform-origin: 0px 50%;">ENIP_CLIENT</span><span class="t" style="left: 102.4px; font-size: 9.4px; color: rgb(68, 68, 68); top: 102px; transform: scaleX(0.918); transform-origin: 0px 50%;">$HOME_NET</span><div class="a" style="left:1px;top:116.25px;width:556px;height:1px;background:#e4e4e4"></div>
<span class="t d" style="left: 5px; font-size: 9.8px; top: 122px; transform: scaleX(0.883); transform-origin: 0px 50%;">ENIP_SERVER</span><span class="t" style="left: 102.4px; font-size: 9.4px; color: rgb(68, 68, 68); top: 122px; transform: scaleX(0.918); transform-origin: 0px 50%;">$HOME_NET</span><div class="a" style="left:1px;top:135.78px;width:556px;height:1px;background:#e4e4e4"></div>
<span class="t d" style="left: 5px; font-size: 9.8px; top: 141px; transform: scaleX(0.887); transform-origin: 0px 50%;">EXTERNAL_NET</span><span class="t" style="left: 102.4px; font-size: 9.4px; color: rgb(68, 68, 68); top: 141px; transform: scaleX(0.928); transform-origin: 0px 50%;">ANY</span><div class="a" style="left:1px;top:155.31px;width:556px;height:1px;background:#e4e4e4"></div>
<span class="t d" style="left: 5px; font-size: 9.8px; top: 161px; transform: scaleX(0.884); transform-origin: 0px 50%;">HOME_NET</span><span class="t" style="left: 102.4px; font-size: 9.4px; color: rgb(68, 68, 68); top: 161px; transform: scaleX(0.871); transform-origin: 0px 50%;">[192.168.0.0/16,172.16.0.0/12</span><div class="a" style="left:1px;top:174.84px;width:556px;height:1px;background:#e4e4e4"></div>
<span class="t d" style="left: 5px; font-size: 9.8px; top: 180px; transform: scaleX(0.912); transform-origin: 0px 50%;">HTTP_PORTS</span><span class="t" style="left: 102.4px; font-size: 9.4px; color: rgb(68, 68, 68); top: 180px; transform: scaleX(0.859); transform-origin: 0px 50%;">[80,81,311,443,591,593,901,1220,1414,1830,2301,2381,2809,3128,3702,4343,5250,7001,7145,7510,7777,7779,8000,8008...</span><div class="a" style="left:1px;top:194.37px;width:556px;height:1px;background:#e4e4e4"></div>
<span class="t d" style="left: 5px; font-size: 9.8px; top: 200px; transform: scaleX(0.906); transform-origin: 0px 50%;">HTTP_SERVERS</span><span class="t" style="left: 102.4px; font-size: 9.4px; color: rgb(68, 68, 68); top: 200px; transform: scaleX(0.918); transform-origin: 0px 50%;">$HOME_NET</span><div class="a" style="left:1px;top:213.90px;width:556px;height:1px;background:#e4e4e4"></div>
<span class="t d" style="left: 5px; font-size: 9.8px; top: 219px; transform: scaleX(0.87); transform-origin: 0px 50%;">MODBUS_CLIENT</span><span class="t" style="left: 102.4px; font-size: 9.4px; color: rgb(68, 68, 68); top: 219px; transform: scaleX(0.918); transform-origin: 0px 50%;">$HOME_NET</span><div class="a" style="left:1px;top:233.43px;width:556px;height:1px;background:#e4e4e4"></div>
<span class="t d" style="left: 5px; font-size: 9.8px; top: 239px; transform: scaleX(0.891); transform-origin: 0px 50%;">MODBUS_SERVER</span><span class="t" style="left: 102.4px; font-size: 9.4px; color: rgb(68, 68, 68); top: 239px; transform: scaleX(0.918); transform-origin: 0px 50%;">$HOME_NET</span><div class="a" style="left:1px;top:252.96px;width:556px;height:1px;background:#e4e4e4"></div>
<span class="t d" style="left: 5px; font-size: 9.8px; top: 258px; transform: scaleX(0.881); transform-origin: 0px 50%;">ORACLE_PORTS</span><span class="t" style="left: 102.4px; font-size: 9.4px; color: rgb(68, 68, 68); top: 258px; transform: scaleX(0.834); transform-origin: 0px 50%;">1521</span><div class="a" style="left:1px;top:272.49px;width:556px;height:1px;background:#e4e4e4"></div>
<span class="t d" style="left: 5px; font-size: 9.8px; top: 278px; transform: scaleX(0.886); transform-origin: 0px 50%;">SHELLCODE_PORTS</span><span class="t" style="left: 102.4px; font-size: 9.4px; color: rgb(68, 68, 68); top: 278px; transform: scaleX(0.866); transform-origin: 0px 50%;">!80</span><div class="a" style="left:1px;top:292.02px;width:556px;height:1px;background:#e4e4e4"></div>
<span class="t d" style="left: 5px; font-size: 9.8px; top: 297px; transform: scaleX(0.901); transform-origin: 0px 50%;">SMTP_SERVERS</span><span class="t" style="left: 102.4px; font-size: 9.4px; color: rgb(68, 68, 68); top: 297px; transform: scaleX(0.918); transform-origin: 0px 50%;">$HOME_NET</span><div class="a" style="left:1px;top:311.55px;width:556px;height:1px;background:#e4e4e4"></div>
<span class="t d" style="left: 5px; font-size: 9.8px; top: 317px; transform: scaleX(0.888); transform-origin: 0px 50%;">SQL_SERVERS</span><span class="t" style="left: 102.4px; font-size: 9.4px; color: rgb(68, 68, 68); top: 317px; transform: scaleX(0.918); transform-origin: 0px 50%;">$HOME_NET</span><div class="a" style="left:1px;top:331.08px;width:556px;height:1px;background:#e4e4e4"></div>
<span class="t d" style="left: 5px; font-size: 9.8px; top: 336px; transform: scaleX(0.896); transform-origin: 0px 50%;">SSH_PORTS</span><span class="t" style="left: 102.4px; font-size: 9.4px; color: rgb(68, 68, 68); top: 336px; transform: scaleX(0.862); transform-origin: 0px 50%;">22</span><span class="t" style="left: 261.1px; font-size: 9.4px; color: rgb(68, 68, 68); top: 161px; transform: scaleX(0.817); transform-origin: 0px 50%;">80/28,</span><span class="t" style="left: 357.7px; font-size: 9.4px; color: rgb(68, 68, 68); top: 161px; transform: scaleX(0.855); transform-origin: 0px 50%;">10.0.0.0/8, !10.3.0.35/32]</span></div>
<!-- buttons -->
<div class="a" style="left:887.800px;top:571.100px;width:163.600px;height:17.100px;background:#fff;border:1px solid #cfcfcf;box-sizing:border-box"></div>
<div class="a" style="left:287px;top:602.500px;width:775px;height:1px;background:#dedede"></div>
<div class="a" style="left:877.900px;top:608px;width:57.500px;height:17.800px;background:#fff;border:1.500px solid #6f9f86;box-sizing:border-box"></div>
<div class="a" style="left:939.600px;top:608px;width:57.200px;height:17.800px;background:#fff;border:1px solid #cfcfcf;box-sizing:border-box"></div>
<div class="a" style="left:1001px;top:608px;width:57px;height:17.800px;background:#fff;border:1px solid #cfcfcf;box-sizing:border-box"></div>
<span class="t d" style="left: 889.8px; top: 576px; transform: scaleX(0.968); transform-origin: 0px 50%;">Восстановить значения по умолчан...</span>
<span class="t d" style="left: 900.9px; top: 612px; transform: scaleX(0.837); transform-origin: 0px 50%;">OK</span>
<span class="t d" style="left: 952.1px; top: 612px; transform: scaleX(0.95); transform-origin: 0px 50%;">Отмена</span>
<span class="t d" style="left: 1005.8px; top: 612px; transform: scaleX(0.965); transform-origin: 0px 50%;">Применить</span>
<!-- frame -->
<div class="a" style="left:0;top:0;width:1252px;height:2px;background:#d9d9d9"></div>
<div class="a" style="left:0;top:740px;width:1252px;height:2px;background:#d9d9d9"></div>
<div class="a" style="left:0;top:0;width:2.500px;height:742px;background:#d9d9d9"></div>
<div class="a" style="left:1250px;top:0;width:2px;height:742px;background:#d9d9d9"></div>


</body></html>
